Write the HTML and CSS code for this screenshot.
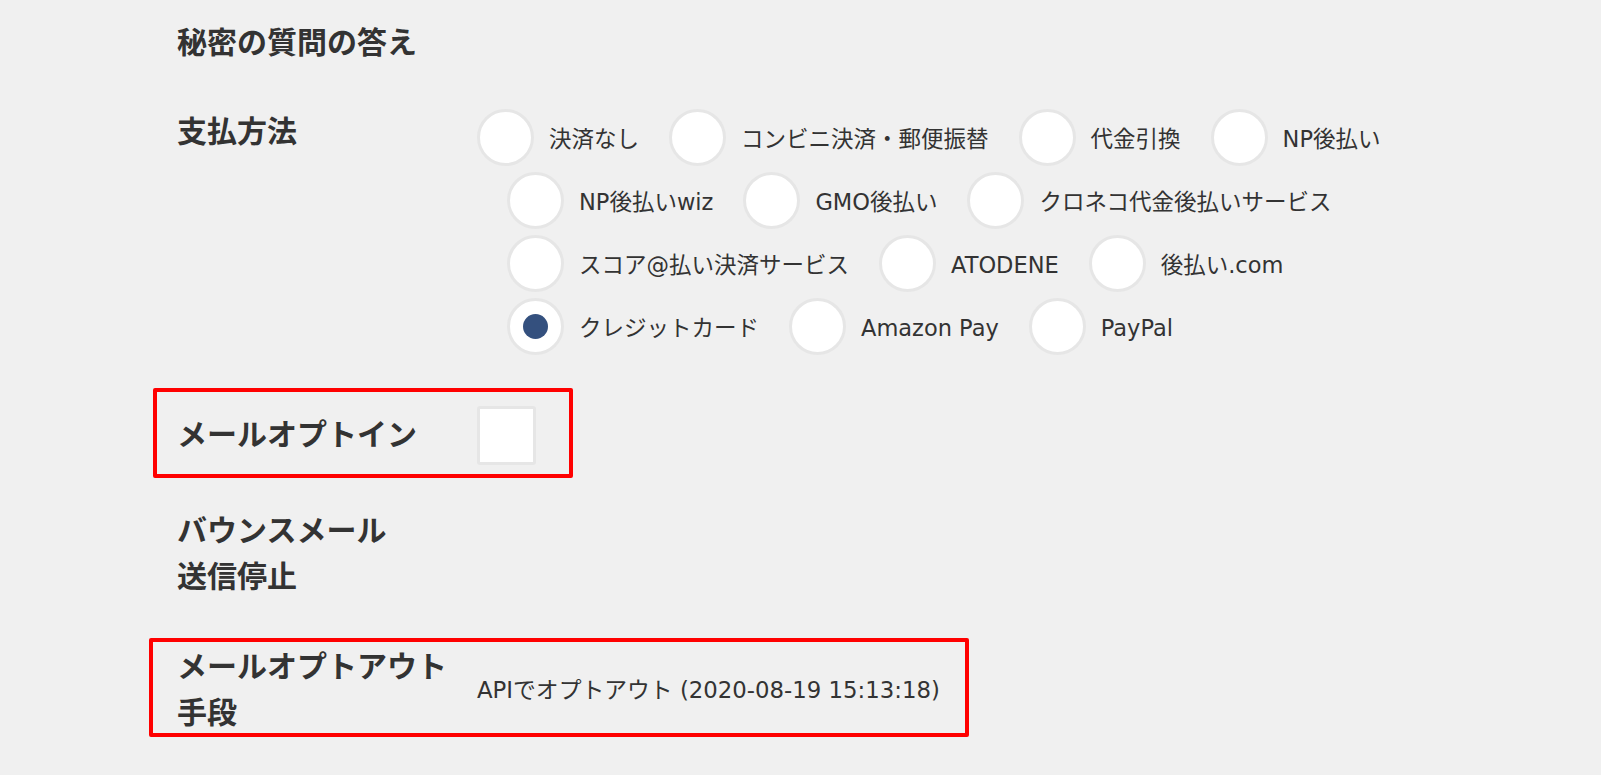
FILE: index.html
```html
<!DOCTYPE html>
<html>
<head>
    <title>会員情報</title>
    <meta charset="utf-8">
    <link rel="stylesheet" href="styles.css">
</head>
<body>
<div class="form">
    <div class="row row-secret">
        <div class="label">秘密の質問の答え</div>
        <div class="value"></div>
    </div>

    <div class="row row-payment">
        <div class="label">支払方法</div>
        <ul class="radios">
            <li><span class="radio"></span><span class="text">決済なし</span></li>
            <li><span class="radio"></span><span class="text">コンビニ決済・郵便振替</span></li>
            <li><span class="radio"></span><span class="text">代金引換</span></li>
            <li><span class="radio"></span><span class="text">NP後払い</span></li>
            <li><span class="radio"></span><span class="text">NP後払いwiz</span></li>
            <li><span class="radio"></span><span class="text">GMO後払い</span></li>
            <li><span class="radio"></span><span class="text">クロネコ代金後払いサービス</span></li>
            <li><span class="radio"></span><span class="text">スコア@払い決済サービス</span></li>
            <li><span class="radio"></span><span class="text">ATODENE</span></li>
            <li><span class="radio"></span><span class="text">後払い.com</span></li>
            <li><span class="radio checked"></span><span class="text">クレジットカード</span></li>
            <li><span class="radio"></span><span class="text">Amazon Pay</span></li>
            <li><span class="radio"></span><span class="text">PayPal</span></li>
        </ul>
    </div>

    <div class="row row-optin">
        <span class="mark mark-optin"></span>
        <div class="label">メールオプトイン</div>
        <span class="checkbox"></span>
    </div>

    <div class="row row-bounce">
        <div class="label">バウンスメール<br>送信停止</div>
        <div class="value"></div>
    </div>

    <div class="row row-optout">
        <span class="mark mark-optout"></span>
        <div class="label">メールオプトアウト<br>手段</div>
        <div class="value">APIでオプトアウト (2020-08-19 15:13:18)</div>
    </div>
</div>
</body>
</html>
```

FILE: styles.css
```css
* {
    margin: 0;
    padding: 0;
}

body {
    background: #f0f0f0;
    color: #333;
    font-family: "DejaVu Sans", "Noto Sans CJK JP", sans-serif;
}

ul {
    list-style: none;
}

.form {
    padding: 17px 0 40px 177px;
}

.row {
    position: relative;
    display: flex;
    align-items: flex-start;
}

.label {
    width: 300px;
    flex-shrink: 0;
    font-family: "Noto Sans CJK JP", sans-serif;
    font-size: 30px;
    font-weight: bold;
    line-height: 46px;
}

.value {
    font-size: 22.8px;
    line-height: 1.3;
}

.row-secret {
    margin-bottom: 44px;
}

.row-payment {
    margin-bottom: 51px;
}

.row-payment .label {
    line-height: 44px;
}

.radios {
    display: flex;
    flex-wrap: wrap;
    width: 970px;
    margin-top: 2px;
    padding-left: 30px;
    row-gap: 6px;
}

.radios li {
    display: flex;
    align-items: center;
    height: 57px;
    margin-right: 30px;
}

.radios li:first-child {
    margin-left: -30px;
}

.radio {
    box-sizing: border-box;
    width: 57px;
    height: 57px;
    border: 3px solid #e6e6e6;
    border-radius: 50%;
    background: #fff;
    display: flex;
    align-items: center;
    justify-content: center;
}

.radio.checked::after {
    content: "";
    width: 25px;
    height: 25px;
    border-radius: 50%;
    background: #34507e;
}

.radios .text {
    margin-left: 15px;
    padding-top: 4px;
    font-size: 22.5px;
    line-height: 1.3;
}

.row-optin {
    align-items: center;
    margin-bottom: 40px;
}

.row-optin .label {
    margin-bottom: 8px;
}

.checkbox {
    box-sizing: border-box;
    width: 59px;
    height: 59px;
    border: 3px solid #e6e6e6;
    border-radius: 3px;
    background: #fff;
}

.row-bounce {
    margin-bottom: 44px;
}

.row-optout {
    align-items: center;
}

.row-optout .value {
    margin-top: 8px;
}

/* 赤枠の注記 */
.mark {
    position: absolute;
    box-sizing: border-box;
    border: 4px solid #f00;
    border-radius: 2px;
}

.mark-optin {
    left: -24px;
    top: -18px;
    width: 420px;
    height: 90px;
}

.mark-optout {
    left: -28px;
    top: -3px;
    width: 820px;
    height: 99px;
}
```
